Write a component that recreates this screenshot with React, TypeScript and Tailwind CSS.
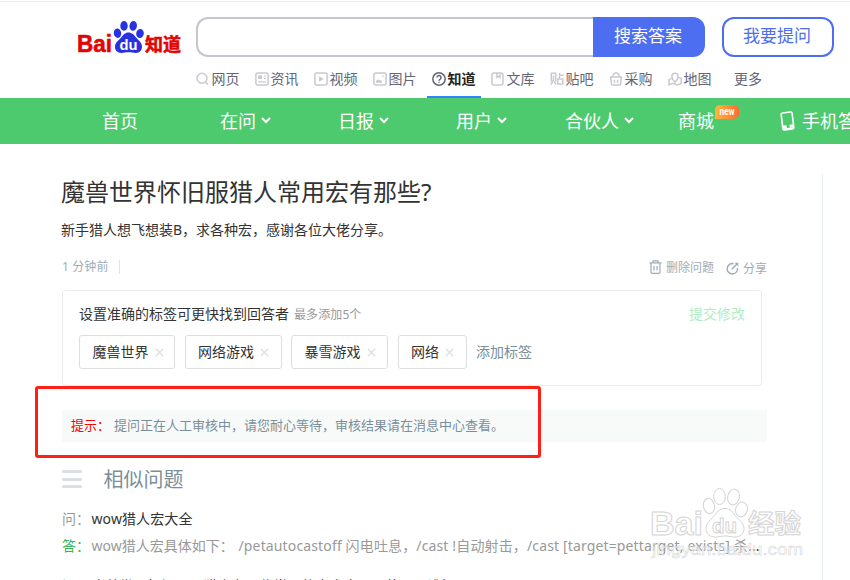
import type { ReactNode } from "react";

interface Tab {
    label: string;
    icon: ReactNode;
    active?: boolean;
}

const tabs: Tab[] = [
    { label: "网页", icon: <path d="M9.600 10.200 12 12.600M11 6.200a5 5 0 1 1-10 0 5 5 0 0 1 10 0Z" /> },
    {
        label: "资讯",
        icon: (
            <>
                <rect x="0.900" y="0.900" width="12.200" height="12.200" rx="2" />
                <rect x="3.500" y="3.900" width="3" height="2.600" fill="currentColor" strokeWidth="1" />
                <path d="M9 4h2M9 6.500h2M3.200 9.900h7.600" strokeWidth="1.200" />
            </>
        ),
    },
    {
        label: "视频",
        icon: (
            <>
                <rect x="0.900" y="0.900" width="12.200" height="12.200" rx="2" />
                <path d="M5.800 5.500v3L8.300 7Z" fill="currentColor" />
            </>
        ),
    },
    {
        label: "图片",
        icon: (
            <>
                <rect x="0.900" y="0.900" width="12.200" height="12.200" rx="2" />
                <path d="M3.600 9.900C4 8.500 5 8 6 8.600l1 .6h1.200v.7Z" fill="currentColor" />
                <path d="M9.300 4.200h1.300" />
            </>
        ),
    },
    {
        label: "知道",
        active: true,
        icon: (
            <>
                <circle cx="7" cy="7" r="6.200" />
                <path d="M5 5.600a2 2 0 1 1 3 1.700c-.7.400-1 .7-1 1.400M7 9.700v1.100" />
            </>
        ),
    },
    {
        label: "文库",
        icon: (
            <>
                <rect x="1" y="0.900" width="11" height="12.200" rx="2" />
                <path d="M6 1v4.300l1.500-1 1.500 1V1" />
            </>
        ),
    },
    {
        label: "贴吧",
        icon: (
            <path d="M1.300 9.500V1.300h4.400v8.200M3.500 3.500v4.200L1 12.700M4.200 9.600l1.900 2.800M9.500 1v5.400M9.500 3.300h4M7.800 7h5v5h-5Z" />
        ),
    },
    {
        label: "采购",
        icon: (
            <>
                <path d="M.8 5h12.400M1.600 5l.8 6.600c.1.900.7 1.500 1.600 1.500h6c.9 0 1.500-.6 1.600-1.500l.8-6.600M3.500 4.600C4 2 5.300.9 7 .9s3 1.100 3.500 3.700" />
                <path d="M5.300 7.700l.3 3M8.700 7.700l-.3 3" />
            </>
        ),
    },
    {
        label: "地图",
        icon: (
            <>
                <path d="M7 10.200C4.900 7.800 3.900 6.400 3.900 4.400a3.100 3.100 0 0 1 6.200 0c0 2-1 3.400-3.100 5.800Z" />
                <path d="M3.500 6.300 1 7.700v5.200l3.500-1.500L9.500 13l3.700-1.500V6.200l-2.500-.7" />
            </>
        ),
    },
];

const navItems = [
    { label: "首页", width: "w-[118px]", arrow: false },
    { label: "在问", width: "w-[118px]", arrow: true },
    { label: "日报", width: "w-[118px]", arrow: true },
    { label: "用户", width: "w-[109px]", arrow: true },
    { label: "合伙人", width: "w-[113px]", arrow: true },
];

const tags = [
    { name: "魔兽世界", width: "w-24" },
    { name: "网络游戏", width: "w-[97px]" },
    { name: "暴雪游戏", width: "w-[97px]" },
    { name: "网络", width: "w-[69px]" },
];

function Logo() {
    return (
        <svg width="104" height="36" viewBox="0 0 104 36" className="block shrink-0 font-['Liberation_Sans','Noto_Sans_CJK_SC',sans-serif] font-bold">
            <g fill="#e10602" stroke="#e10602" strokeWidth="0.600">
                <text x="-1" y="31" fontSize="23" textLength="35" lengthAdjust="spacingAndGlyphs">Bai</text>
                <text x="67" y="30" fontSize="18" textLength="36" lengthAdjust="spacingAndGlyphs">知道</text>
            </g>
            <g fill="#2932e1">
                <ellipse cx="39.500" cy="12.200" rx="3.700" ry="4.700" transform="rotate(-8 39.500 12.200)" />
                <ellipse cx="46" cy="4.900" rx="3.700" ry="4.900" />
                <ellipse cx="55.200" cy="4.900" rx="3.700" ry="4.900" transform="rotate(8 55.200 4.900)" />
                <ellipse cx="62" cy="12.500" rx="3.800" ry="4.600" transform="rotate(12 62 12.500)" />
                <path d="M50.500 11.500c-3.500 0-5.300 2.500-7.500 5.200-2.500 3-6 4.800-6 9 0 4 2.700 6.200 6.200 6.200 3 0 4.500-.7 7.300-.7s4.600.7 7.500.7c3.500 0 6-2.500 6-6.200 0-4.200-3.300-6-5.700-9-2.300-2.800-4.200-5.200-7.800-5.200Z" />
            </g>
            <text x="41.500" y="29.300" fontSize="15" fill="#fff" textLength="18" lengthAdjust="spacingAndGlyphs">du</text>
        </svg>
    );
}

function ArrowDown() {
    return (
        <svg width="10" height="7" viewBox="0 0 10 7" fill="none" stroke="#fff" strokeWidth="2" className="ml-[5px] mb-px">
            <path d="m1 1 4 4 4-4" />
        </svg>
    );
}

function Header() {
    return (
        <header className="h-[98px] pt-px">
            <div className="border-t border-[#ebebeb] pt-[15px] flex items-start">
                <div className="ml-[78px] mt-1 w-[118px]"><Logo /></div>
                <input className="w-[397px] h-10 rounded-l-xl border-2 border-r-0 border-[#c4c7ce] outline-none px-3" />
                <button className="w-28 h-10 rounded-r-xl bg-[#4e6ef2] text-white text-[17px] leading-[38px] pb-0.5 pr-0.5">搜索答案</button>
                <button className="ml-[17px] w-28 h-10 rounded-xl border-2 border-[#4e6ef2] text-[#4e6ef2] text-[17px] leading-[34px] pb-0.5 pr-0.5">我要提问</button>
            </div>
            <nav className="ml-[196px] h-[41px] flex gap-4 text-sm text-[#626675]">
                {tabs.map((tab) => (
                    <a key={tab.label} className={tab.active ? "w-[54px] -mx-[5.500px] pl-[5.500px] h-full flex items-center gap-[1.500px] border-b-2 border-[#3385ff] text-[#222] font-bold pt-[5px]" : "w-[43px] h-full flex items-center gap-[1.500px] pt-[3px]"}>
                        <svg width="14" height="14" viewBox="0 0 14 14" fill="none" stroke="currentColor" strokeWidth="1.500" className={tab.active ? "shrink-0 text-[#626675]" : "shrink-0 text-[#c8cad2]"}>
                            {tab.icon}
                        </svg>
                        <span className="whitespace-nowrap">{tab.label}</span>
                    </a>
                ))}
                <a className="flex items-center pl-[7px] pt-[3px] whitespace-nowrap">更多</a>
            </nav>
        </header>
    );
}

function GreenNav() {
    return (
        <nav className="h-[46px] bg-[#4dca6d] text-white text-lg pl-[102px] flex items-center whitespace-nowrap overflow-hidden">
            {navItems.map((item) => (
                <a key={item.label} className={`${item.width} shrink-0 flex items-center`}>
                    {item.label}
                    {item.arrow && <ArrowDown />}
                </a>
            ))}
            <a className="w-[102px] shrink-0 relative">
                商城
                <span className="absolute left-[37px] -top-[2px] w-6 h-3.5 rounded-t-[5px] rounded-br-[5px] bg-linear-to-r from-[#ffb63d] to-[#ff6a33] text-[11px] leading-[13px] text-center font-bold font-['Roboto',sans-serif]">
                    <span className="inline-block scale-x-75 -mx-1">new</span>
                </span>
            </a>
            <svg width="15" height="20" viewBox="0 0 15 20" fill="none" stroke="#fff" strokeWidth="1.600" className="shrink-0 mr-[7px]">
                <g transform="rotate(-7 7.500 10)">
                    <rect x="2" y="1.500" width="11" height="17" rx="1.500" />
                    <path d="M2 15.500h4M9 15.500h4" strokeWidth="3" />
                    <path d="M2 17.800h11" />
                </g>
            </svg>
            <a className="shrink-0">手机答题</a>
        </nav>
    );
}

function TagCard() {
    return (
        <section className="mt-[13px] w-[700px] h-24 rounded border border-[#e8ecee] px-4 pt-[13px]">
            <div className="flex items-center h-5">
                <span className="text-sm leading-5 text-[#333] w-[215px]">设置准确的标签可更快找到回答者</span>
                <span className="text-xs text-[#999] mt-px tracking-[0.1px]">最多添加5个</span>
                <span className="ml-auto text-sm leading-5 text-[#b1ecc4]">提交修改</span>
            </div>
            <div className="mt-[11px] flex items-center gap-[9.500px]">
                {tags.map((tag) => (
                    <span key={tag.name} className={`${tag.width} h-[34px] rounded-[3px] border border-[#dcdfe1] pl-[12.500px] flex items-center text-sm text-[#333]`}>
                        {tag.name}
                        <svg width="9" height="9" viewBox="0 0 9 9" stroke="#dcdfe1" strokeWidth="1.300" className="ml-1.5">
                            <path d="m.8.8 7.400 7.400M8.200.8.8 8.200" />
                        </svg>
                    </span>
                ))}
                <a className="text-sm text-[#7a8f9a]">添加标签</a>
            </div>
        </section>
    );
}

function SimilarQuestions() {
    return (
        <section className="mt-[22px]">
            <h2 className="flex items-center h-8 text-xl text-[#7a8f9a]">
                <span className="w-5 mr-[21.500px] -mt-0.5 flex flex-col gap-[4.500px]">
                    <i className="h-[3px] rounded-sm bg-[#d9dfe2]" />
                    <i className="h-[3px] rounded-sm bg-[#d9dfe2]" />
                    <i className="h-[3px] rounded-sm bg-[#d9dfe2]" />
                </span>
                相似问题
            </h2>
            <div className="mt-[9px] flex h-7 items-center text-sm whitespace-nowrap">
                <span className="w-[29.500px] text-[#999]">问：</span>
                <a className="text-[#333] tracking-[0.100px]">wow猎人宏大全</a>
            </div>
            <div className="-mt-px flex h-[27px] items-center text-sm whitespace-nowrap text-[#999]">
                <span className="w-[29.500px] shrink-0 text-[#35b558]">答：</span>
                <p className="w-[147px] shrink-0">wow猎人宏具体如下：</p>
                <p className="tracking-[0.140px]">/petautocastoff 闪电吐息，/cast !自动射击，/cast [target=pettarget, exists] 杀<span className="text-[#333]">...</span></p>
            </div>
            <div className="mt-[13px] flex h-7 items-center text-sm whitespace-nowrap">
                <span className="w-[29.500px] text-[#999]">问：</span>
                <a className="text-[#333]">魔兽世界怀旧服，猎人有哪些常用的宏命令可以使用啊谁知</a>
            </div>
        </section>
    );
}

function Watermark() {
    return (
        <svg width="156" height="76" viewBox="0 0 156 76" className="absolute left-[650px] top-[486px] font-['Liberation_Sans','Noto_Sans_CJK_SC',sans-serif] font-bold" fill="#fff" fillOpacity="0.850" stroke="#d4d4d4" strokeWidth="1">
            <text x="0" y="49" fontSize="34" textLength="53" lengthAdjust="spacingAndGlyphs">Bai</text>
            <ellipse cx="59" cy="20" rx="5.500" ry="7.700" transform="rotate(-12 59 20)" />
            <ellipse cx="69.500" cy="10.500" rx="5.800" ry="8" />
            <ellipse cx="83.500" cy="11" rx="5.800" ry="8" transform="rotate(12 83.500 11)" />
            <ellipse cx="91.500" cy="23.500" rx="5.800" ry="7.500" transform="rotate(15 91.500 23.500)" />
            <path d="M75 22.500c-6 0-8.500 4.500-11.500 8-3.500 4-7.500 6.500-7.500 12 0 5.500 4 8.500 9 8.500 4 0 6-1 10-1s6 1 10 1c5 0 9-3 9-8.500s-4.500-8-8-12c-3-3.500-5-8-11-8Z" />
            <text x="62" y="46.500" fontSize="21" textLength="25" lengthAdjust="spacingAndGlyphs">du</text>
            <text x="98" y="47" fontSize="26" textLength="53" lengthAdjust="spacingAndGlyphs">经验</text>
            <text x="2" y="69" fontSize="17" textLength="151" lengthAdjust="spacingAndGlyphs" fillOpacity="0.500" strokeWidth="0.500" fontWeight="400">jingyan.baidu.com</text>
        </svg>
    );
}

export default function App() {
    return (
        <div className="relative w-[850px] h-[580px] overflow-hidden bg-white font-['Noto_Sans','Noto_Sans_CJK_SC',sans-serif]">
            <Header />
            <GreenNav />
            <main className="flex pl-[62px]">
                <div className="w-[705px] shrink-0 pt-7">
                    <h1 className="-ml-px text-2xl leading-10 text-[#333] whitespace-nowrap">魔兽世界怀旧服猎人常用宏有那些?</h1>
                    <p className="-ml-px mt-[7px] text-sm leading-[22px] text-[#333]">新手猎人想飞想装B，求各种宏，感谢各位大佬分享。</p>
                    <div className="mt-4 h-5 flex items-center text-xs text-[#9eacb6]">
                        <span className="w-[56.500px] tracking-[0.100px]">1 分钟前</span>
                        <i className="w-px h-3.5 bg-[#dde4e9]" />
                        <svg width="13" height="14" viewBox="0 0 13 14" fill="none" stroke="currentColor" strokeWidth="1.200" className="ml-auto mr-1">
                            <path d="M.5 2.800h12M4 2.500V.8h5v1.700M2 3v9.300c0 .6.400 1 1 1h7c.6 0 1-.4 1-1V3M5 6v4.500M8 6v4.500" />
                        </svg>
                        <span className="mr-3 mt-0.5">删除问题</span>
                        <svg width="13" height="13" viewBox="0 0 13 13" fill="none" stroke="currentColor" strokeWidth="1.400" className="mt-[3px] mr-1">
                            <path d="M7.500 1.700A5.200 5.200 0 1 0 11.500 6M5.800 7.200 11 2" />
                            <path d="M8.600.8h3.700v3.700Z" fill="currentColor" stroke="none" />
                        </svg>
                        <span className="mt-[3px]">分享</span>
                    </div>
                    <TagCard />
                    <div className="mt-6 h-8 bg-[#f8faf9] flex items-center pl-[9px] text-[13px]">
                        <span className="w-[43px] text-[#ff0000]">提示：</span>
                        <span className="text-[#7a8f9a]">提问正在人工审核中，请您耐心等待，审核结果请在消息中心查看。</span>
                    </div>
                    <SimilarQuestions />
                </div>
                <aside className="ml-[55px] mt-[30px] h-[410px] border-l border-[#e6ebee]" />
            </main>
            {/* highlight frame over the review notice */}
            <div className="absolute left-[35px] top-[386px] w-[506px] h-[72px] rounded-[3px] border-3 border-[#ff2015]" />
            <Watermark />
        </div>
    );
}
